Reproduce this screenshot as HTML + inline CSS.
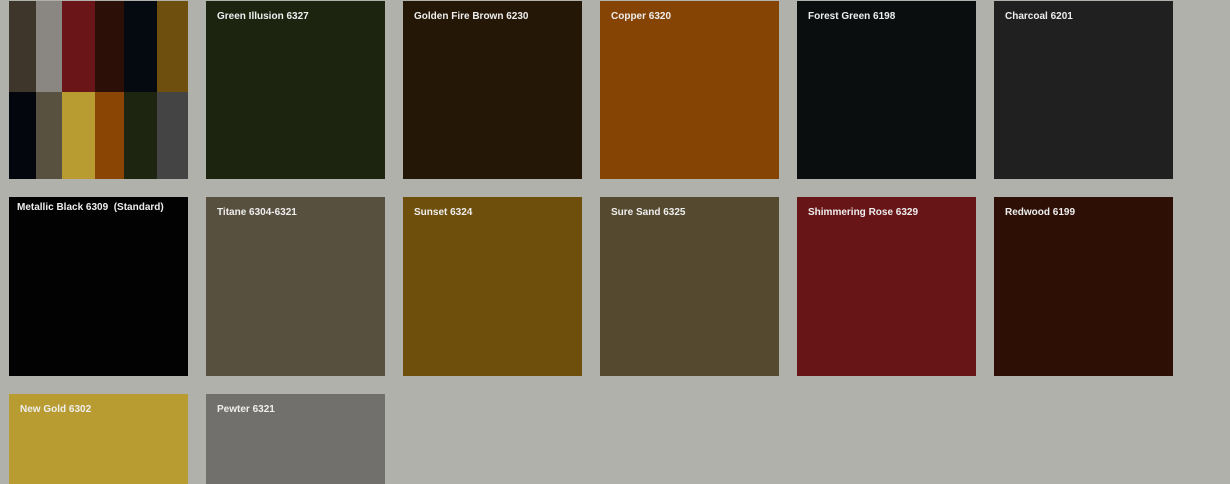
<!DOCTYPE html><html><head><style>
body{margin:0;width:1230px;height:484px;background:#b1b1ac;position:relative;overflow:hidden;font-family:"Liberation Sans",sans-serif}
.t{position:absolute;width:179px;height:179px}
.t span{position:absolute;left:11px;top:10px;color:#eee;font-size:10px;font-weight:bold;white-space:pre}
.m{position:absolute}
</style></head><body>
<div class="m" style="left:9px;top:1px;width:27px;height:91px;background:#3e352b"></div>
<div class="m" style="left:36px;top:1px;width:26px;height:91px;background:#8a8782"></div>
<div class="m" style="left:62px;top:1px;width:33px;height:91px;background:#6a1619"></div>
<div class="m" style="left:95px;top:1px;width:29px;height:91px;background:#2c1008"></div>
<div class="m" style="left:124px;top:1px;width:33px;height:91px;background:#040a10"></div>
<div class="m" style="left:157px;top:1px;width:31px;height:91px;background:#6f4f0e"></div>
<div class="m" style="left:9px;top:92px;width:27px;height:87px;background:#03060d"></div>
<div class="m" style="left:36px;top:92px;width:26px;height:87px;background:#58513f"></div>
<div class="m" style="left:62px;top:92px;width:33px;height:87px;background:#b89b31"></div>
<div class="m" style="left:95px;top:92px;width:29px;height:87px;background:#8a4504"></div>
<div class="m" style="left:124px;top:92px;width:33px;height:87px;background:#1d2410"></div>
<div class="m" style="left:157px;top:92px;width:31px;height:87px;background:#444444"></div>

<div class="t" style="left:206px;top:1px;height:178px;background:#1c2410"><span>Green Illusion 6327</span></div>
<div class="t" style="left:403px;top:1px;height:178px;background:#241705"><span>Golden Fire Brown 6230</span></div>
<div class="t" style="left:600px;top:1px;height:178px;background:#864404"><span>Copper 6320</span></div>
<div class="t" style="left:797px;top:1px;height:178px;background:#0a0e0f"><span>Forest Green 6198</span></div>
<div class="t" style="left:994px;top:1px;height:178px;background:#202020"><span>Charcoal 6201</span></div>

<div class="t" style="left:9px;top:197px;background:#020202"><span style="left:8px;top:5px">Metallic Black 6309  (Standard)</span></div>
<div class="t" style="left:206px;top:197px;background:#58503f"><span>Titane 6304-6321</span></div>
<div class="t" style="left:403px;top:197px;background:#6f4f0c"><span>Sunset 6324</span></div>
<div class="t" style="left:600px;top:197px;background:#554a2f"><span>Sure Sand 6325</span></div>
<div class="t" style="left:797px;top:197px;background:#681518"><span>Shimmering Rose 6329</span></div>
<div class="t" style="left:994px;top:197px;background:#2d0f06"><span>Redwood 6199</span></div>

<div class="t" style="left:9px;top:394px;height:90px;background:#b89c32"><span>New Gold 6302</span></div>
<div class="t" style="left:206px;top:394px;height:90px;background:#72706c"><span>Pewter 6321</span></div>
</body></html>
